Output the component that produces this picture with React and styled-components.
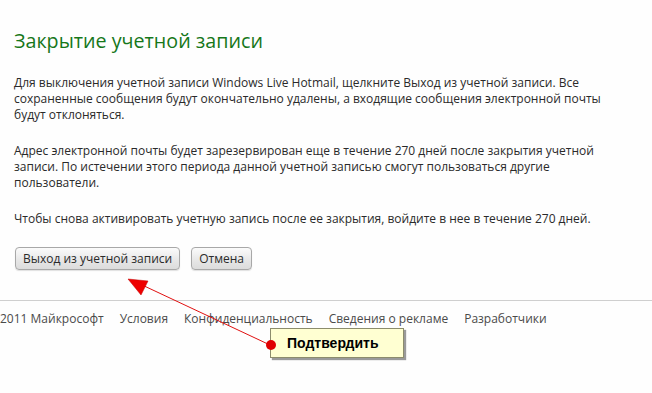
import styled, { createGlobalStyle } from "styled-components"

const Global = createGlobalStyle`
    html, body {
        margin: 0;
        padding: 0;
        background: #fefefe;
    }
    body {
        font-family: "Open Sans", "DejaVu Sans", sans-serif;
        color: #2a2a2a;
    }
`;

const Page = styled.div`
    position: relative;
    width: 652px;
    height: 393px;
    overflow: hidden;
`;

const Content = styled.div`
    padding: 27px 0 0 14px;
    width: 600px;
`;

const Title = styled.h1`
    margin: 0 0 20px;
    font-size: 19.7px;
    font-weight: 400;
    line-height: 28px;
    color: #16771a;
`;

const Text = styled.p`
    margin: 0 0 20px;
    font-size: 12px;
    line-height: 16px;
    white-space: nowrap;
`;

const Buttons = styled.div`
    display: flex;
    gap: 11px;
    margin-top: 17px;
    padding-left: 1px;
`;

const Button = styled.button`
    height: 23px;
    padding: 0 7px;
    border: 1px solid #a8a8a8;
    border-radius: 4px;
    background: linear-gradient(#fbfbfb, #e6e6e6 60%, #dcdcdc);
    box-shadow: 0 1px 1px rgba(0, 0, 0, 0.12);
    font-family: "Open Sans", "DejaVu Sans", sans-serif;
    font-size: 12px;
    color: #2a2a2a;
    cursor: pointer;
`;

const Footer = styled.div`
    margin-top: 30px;
    border-top: 1px solid #cfcfcf;
    display: flex;
    gap: 16px;
    padding-top: 9px;
    font-size: 12px;
    color: #4a4a4a;
`;

const FooterItem = styled.span`
    white-space: nowrap;
`;

const Arrow = styled.svg`
    position: absolute;
    left: 0;
    top: 0;
    pointer-events: none;
`;

const Callout = styled.div`
    position: absolute;
    left: 270px;
    top: 328px;
    width: 134px;
    height: 30px;
    box-sizing: border-box;
    padding-left: 16px;
    display: flex;
    align-items: center;
    background: #ffffd2;
    border: 1px solid #8c8c6c;
    box-shadow: 2px 2px 1px #9a9a9a;
    font-family: "Liberation Sans", Arial, sans-serif;
    font-weight: 700;
    font-size: 14px;
    color: #000;
`;

const Dot = styled.span`
    position: absolute;
    left: -5px;
    top: 11px;
    width: 10px;
    height: 10px;
    border-radius: 50%;
    background: #e00000;
`;

const App = () => {
    return (
        <Page>
            <Global />
            <Content>
                <Title>Закрытие учетной записи</Title>
                <Text>
                    Для выключения учетной записи Windows Live Hotmail, щелкните Выход из учетной записи. Все<br />
                    сохраненные сообщения будут окончательно удалены, а входящие сообщения электронной почты<br />
                    будут отклоняться.
                </Text>
                <Text>
                    Адрес электронной почты будет зарезервирован еще в течение 270 дней после закрытия учетной<br />
                    записи. По истечении этого периода данной учетной записью смогут пользоваться другие<br />
                    пользователи.
                </Text>
                <Text>
                    Чтобы снова активировать учетную запись после ее закрытия, войдите в нее в течение 270 дней.
                </Text>
                <Buttons>
                    <Button>Выход из учетной записи</Button>
                    <Button>Отмена</Button>
                </Buttons>
            </Content>
            <Footer>
                <FooterItem>2011 Майкрософт</FooterItem>
                <FooterItem>Условия</FooterItem>
                <FooterItem>Конфиденциальность</FooterItem>
                <FooterItem>Сведения о рекламе</FooterItem>
                <FooterItem>Разработчики</FooterItem>
            </Footer>
            <Arrow width="652" height="393">
                <line x1="270" y1="345" x2="140" y2="284" stroke="#e01010" strokeWidth="1" />
                <polygon points="128,279 148,281 141,295" fill="#ee0000" stroke="#c00000" strokeWidth="0.5" />
            </Arrow>
            <Callout>
                <Dot />
                Подтвердить
            </Callout>
        </Page>
    )
}

export default App
